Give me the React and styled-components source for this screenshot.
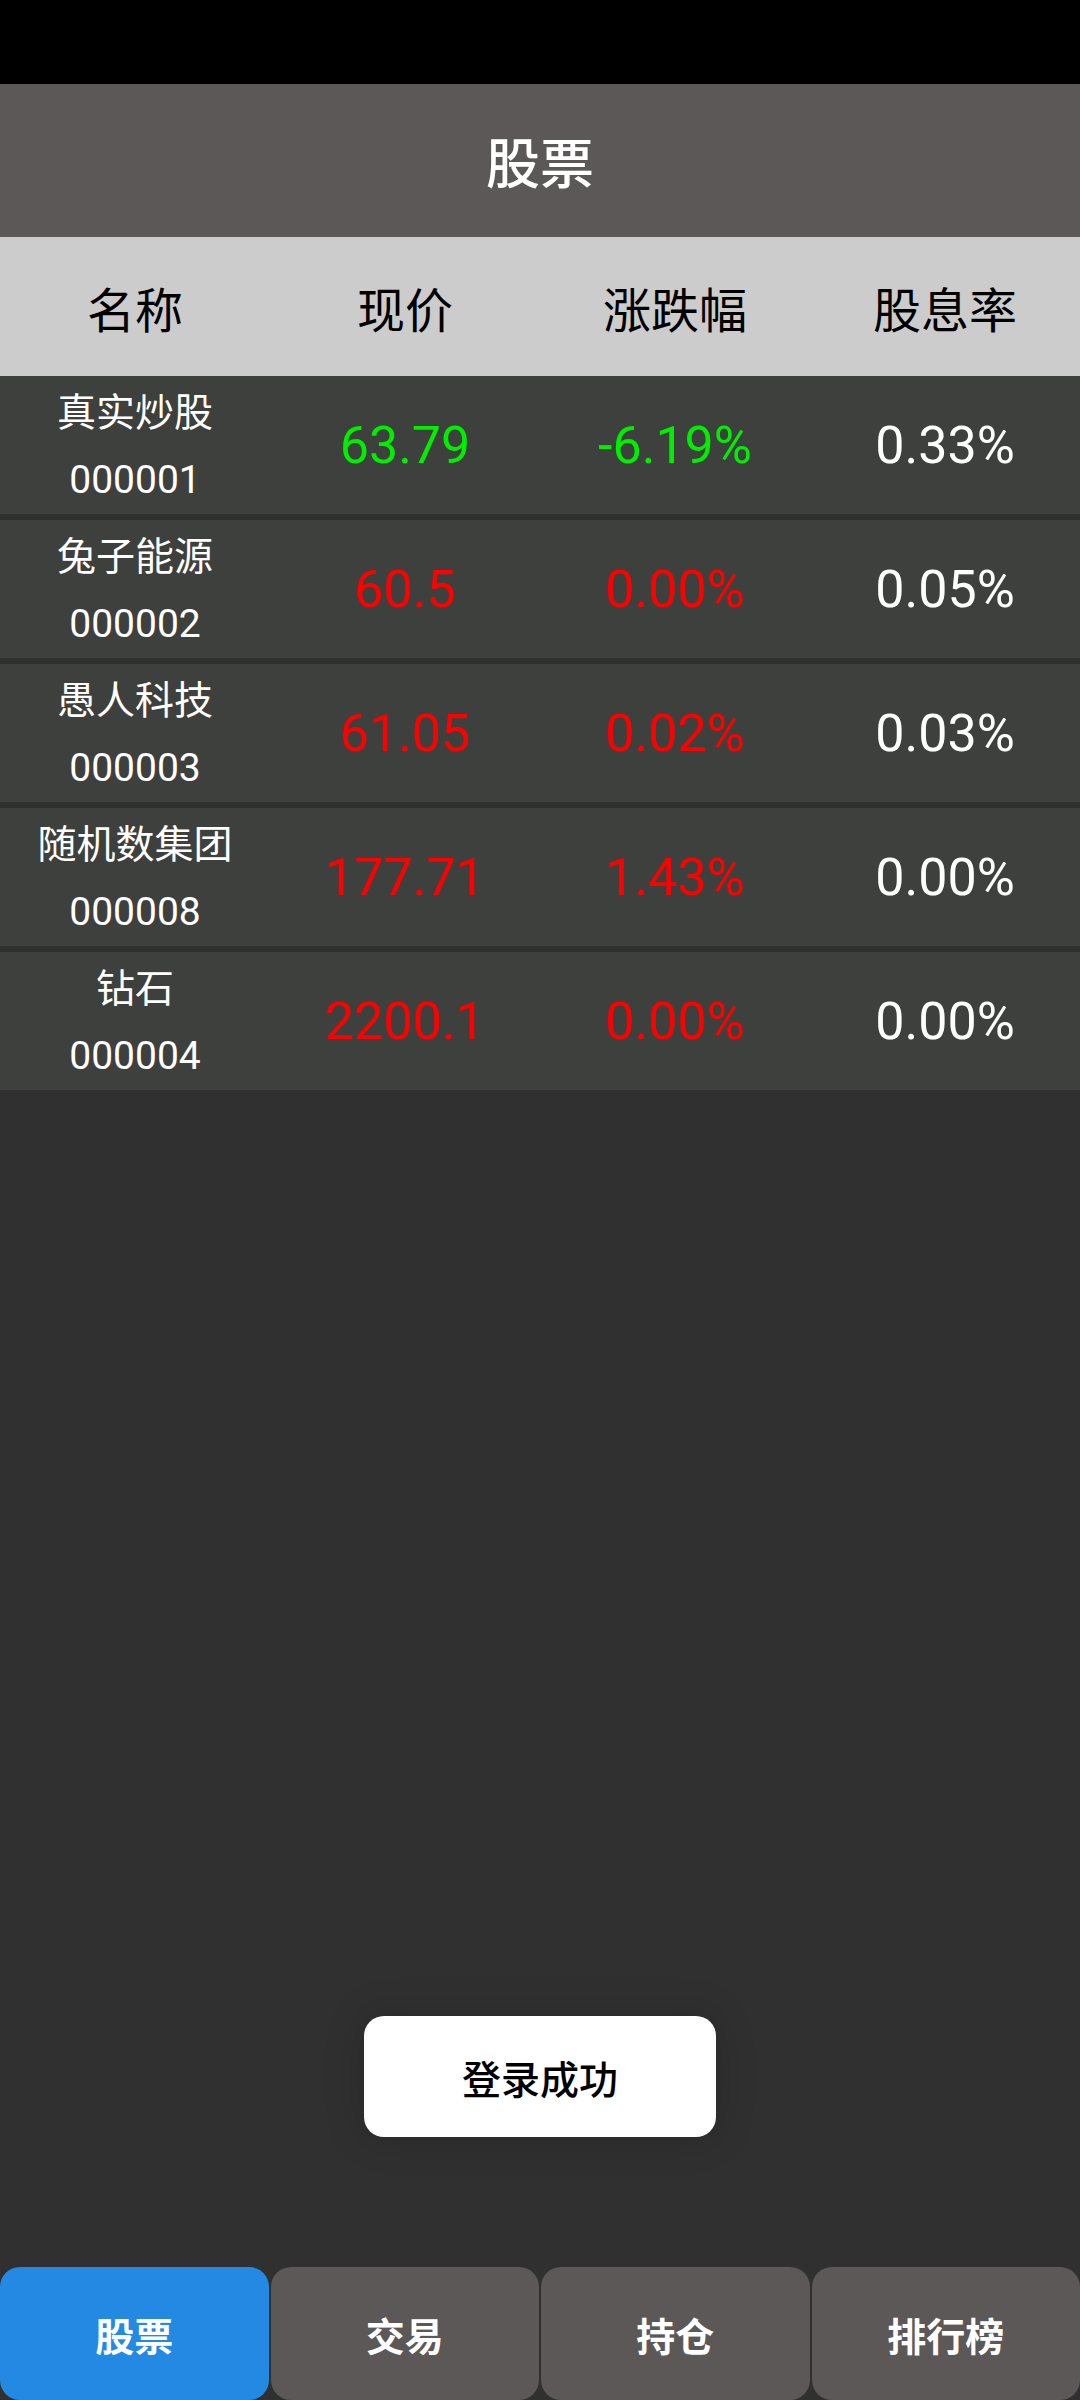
import styled, { createGlobalStyle } from "styled-components";

const GlobalStyle = createGlobalStyle`
  html, body {
    margin: 0;
    padding: 0;
    background: #303030;
  }
  body {
    font-family: Roboto, "Noto Sans CJK SC", sans-serif;
  }
`;

const Page = styled.div`
  position: relative;
  width: 1080px;
  height: 2400px;
  display: flex;
  flex-direction: column;
  background: #303030;
  overflow: hidden;
`;

const StatusBar = styled.div`
  height: 84px;
  background: #000;
`;

const TitleBar = styled.div`
  height: 153px;
  background: #5b5857;
  display: flex;
  align-items: center;
  justify-content: center;
  color: #fff;
  font-size: 54px;
  font-weight: 500;
`;

const HeaderRow = styled.div`
  height: 139px;
  background: #cccccc;
  display: grid;
  grid-template-columns: repeat(4, 1fr);
  align-items: center;
  justify-items: center;
  color: #000;
  font-size: 48px;
`;

const List = styled.div`
  display: flex;
  flex-direction: column;
  gap: 6px;
`;

const Row = styled.div`
  height: 138px;
  background: #3d403d;
  display: grid;
  grid-template-columns: repeat(4, 1fr);
  align-items: center;
  justify-items: center;
`;

const NameCell = styled.div`
  display: flex;
  flex-direction: column;
  align-items: center;
  color: #fff;
  font-size: 39px;
  line-height: 67px;
  margin-top: 3px;
`;

const Value = styled.div`
  font-size: 52px;
  color: ${(p) => p.$color};
`;

const Spacer = styled.div`
  flex: 1;
`;

const TabBar = styled.div`
  height: 133px;
  display: flex;
  gap: 2px;
`;

const Tab = styled.div`
  flex: 1;
  border-radius: 20px;
  background: ${(p) => (p.$active ? "#2389e2" : "#5b5857")};
  color: #fff;
  font-size: 39px;
  font-weight: 700;
  display: flex;
  align-items: center;
  justify-content: center;
`;

const Toast = styled.div`
  position: absolute;
  left: 364px;
  top: 2016px;
  width: 352px;
  height: 121px;
  border-radius: 20px;
  background: #fff;
  box-shadow: 0 0 40px rgba(0, 0, 0, 0.18);
  display: flex;
  align-items: center;
  justify-content: center;
  color: #000;
  font-size: 39px;
  font-weight: 500;
`;

const GREEN = "#00ee00";
const RED = "#ff0000";

const stocks = [
  { name: "真实炒股", code: "000001", price: "63.79", change: "-6.19%", rate: "0.33%", up: false },
  { name: "兔子能源", code: "000002", price: "60.5", change: "0.00%", rate: "0.05%", up: true },
  { name: "愚人科技", code: "000003", price: "61.05", change: "0.02%", rate: "0.03%", up: true },
  { name: "随机数集团", code: "000008", price: "177.71", change: "1.43%", rate: "0.00%", up: true },
  { name: "钻石", code: "000004", price: "2200.1", change: "0.00%", rate: "0.00%", up: true },
];

const tabs = ["股票", "交易", "持仓", "排行榜"];

export default function App() {
  return (
    <Page>
      <GlobalStyle />
      <StatusBar />
      <TitleBar>股票</TitleBar>
      <HeaderRow>
        <span>名称</span>
        <span>现价</span>
        <span>涨跌幅</span>
        <span>股息率</span>
      </HeaderRow>
      <List>
        {stocks.map((s) => (
          <Row key={s.code}>
            <NameCell>
              <span>{s.name}</span>
              <span>{s.code}</span>
            </NameCell>
            <Value $color={s.up ? RED : GREEN}>{s.price}</Value>
            <Value $color={s.up ? RED : GREEN}>{s.change}</Value>
            <Value $color="#fff">{s.rate}</Value>
          </Row>
        ))}
      </List>
      <Spacer />
      <TabBar>
        {tabs.map((t, i) => (
          <Tab key={t} $active={i === 0}>
            {t}
          </Tab>
        ))}
      </TabBar>
      <Toast>登录成功</Toast>
    </Page>
  );
}
